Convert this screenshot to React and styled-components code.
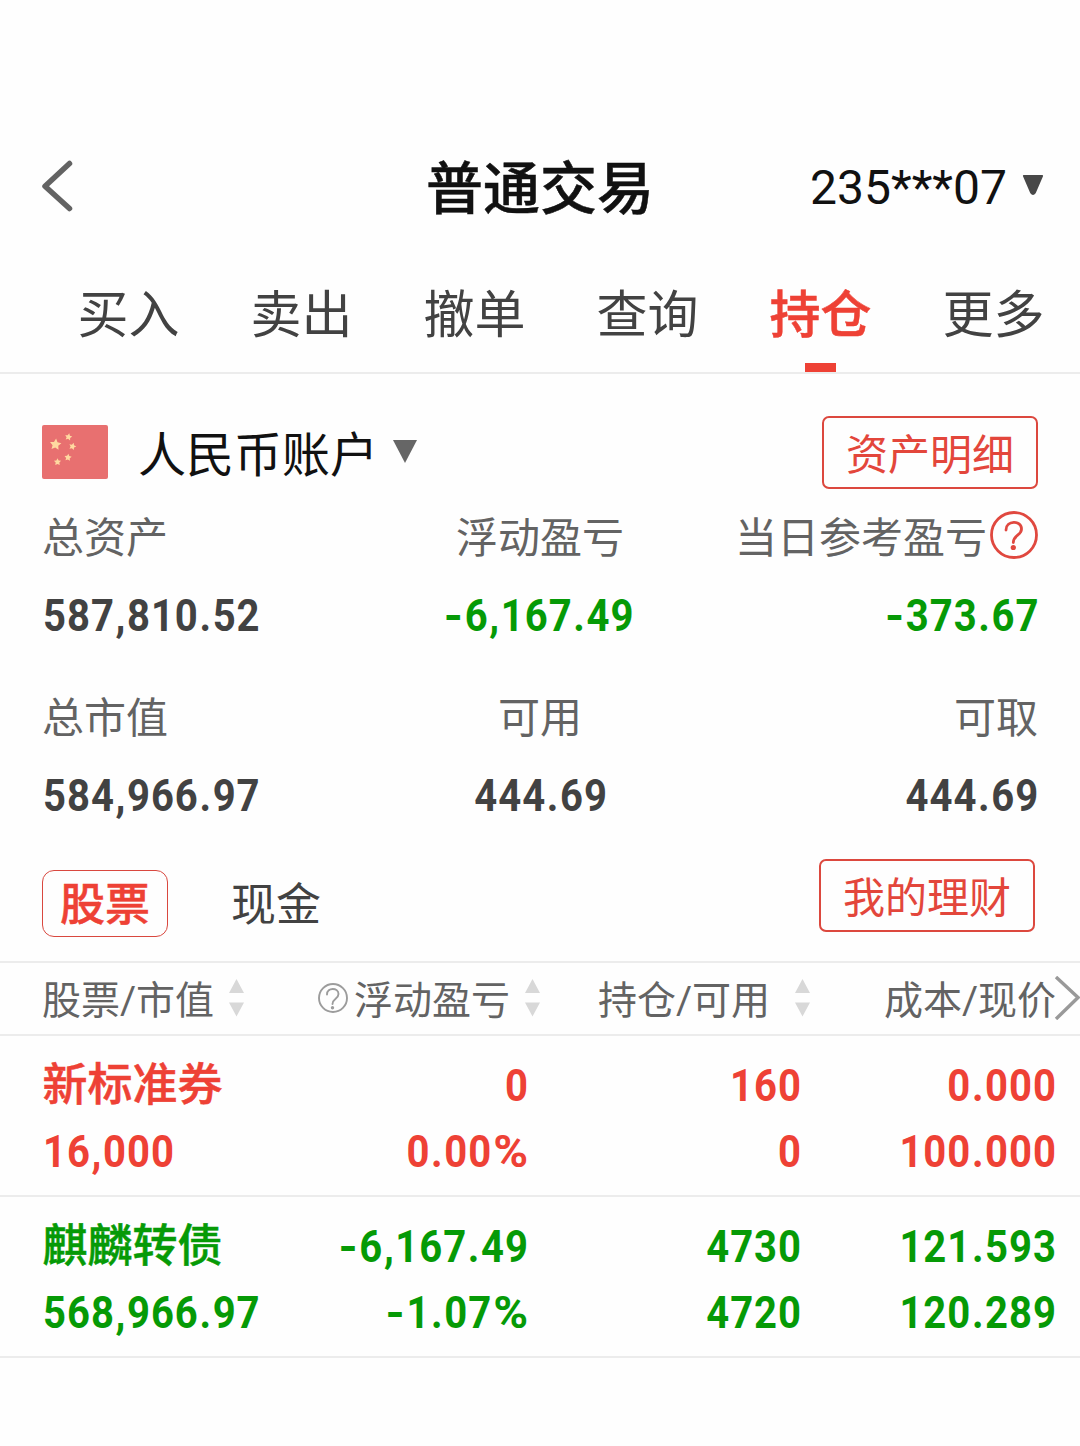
import React from 'react';
import styled, { createGlobalStyle } from 'styled-components';

const RED = '#ee4135';
const GREEN = '#069a06';
const DARK = '#424242';
const GRAY = '#636363';
const LINE = '#ececec';

const GlobalStyle = createGlobalStyle`
	* {
		box-sizing: border-box;
	}

	body {
		margin: 0;
		background: #fefefe;
		font-family: Roboto, 'Noto Sans CJK SC', sans-serif;
	}
`;

const Page = styled.div`
	width: 1080px;
	min-height: 1446px;
	padding-top: 114px;
	overflow: hidden;
	white-space: nowrap;
`;

const Header = styled.header`
	display: grid;
	grid-template-columns: 1fr 228px 1fr;
	align-items: center;
	height: 144px;
	padding: 0 36px 0 38px;
`;

const BackIcon = styled.svg`
	margin-left: 2px;
`;

const Title = styled.h1`
	margin: 0;
	padding-top: 7px;
	color: #111;
	font-size: 57px;
	font-weight: 500;
	line-height: 72px;
	text-indent: -1px;
	-webkit-text-stroke: 0.5px;
`;

const AccountNo = styled.div`
	display: flex;
	justify-content: flex-end;
	align-items: center;
	gap: 15px;
	color: #111;
	font-size: 48px;
	line-height: 72px;
	padding-top: 4px;

	svg {
		margin-bottom: 6px;
	}
`;

const Tabs = styled.nav`
	display: grid;
	grid-template-columns: repeat(6, 173px);
	height: 116px;
	padding-left: 42px;
	border-bottom: 2px solid ${LINE};
`;

const Tab = styled.div`
	display: flex;
	flex-direction: column;
	align-items: center;
	color: ${props => (props.$active ? RED : DARK)};
	font-size: 51px;
	font-weight: ${props => (props.$active ? 500 : 400)};
	line-height: 115px;
	-webkit-text-stroke: ${props => (props.$active ? 0.5 : 0)}px;

	&::after {
		content: '';
		width: 31px;
		height: 9px;
		margin-top: -10px;
		background: ${props => (props.$active ? RED : 'transparent')};
	}
`;

const Account = styled.section`
	display: flex;
	align-items: center;
	height: 73px;
	margin: 42px 42px 11px;
	color: #111;
	font-size: 48px;
	line-height: 73px;

	svg {
		margin-bottom: 2px;
	}
`;

const AccountName = styled.span`
	margin: 5px 15px 0 30px;
`;

const OutlineButton = styled.button`
	width: 216px;
	height: 73px;
	margin-left: auto;
	padding: 6px 0 0;
	border: 2px solid #dc483e;
	border-radius: 7px;
	background: transparent;
	color: #e3463b;
	font-family: inherit;
	font-size: 42px;
	line-height: 63px;
`;

const Stats = styled.section`
	display: grid;
	grid-template-columns: 1fr 300px 1fr;
	row-gap: 25px;
	padding: 0 42px;
`;

const Stat = styled.div`
	display: flex;
	flex-direction: column;
	align-items: ${props => props.$align || 'flex-start'};
`;

const StatLabel = styled.div`
	display: flex;
	align-items: center;
	height: 77px;
	color: ${GRAY};
	font-size: 42px;
	line-height: 77px;

	svg {
		margin: 0 0 7px 3px;
	}
`;

// narrowed digits with open tracking, squeezed towards the aligned edge
const FigureText = styled.div`
	color: ${props => props.$color || DARK};
	font-size: 45px;
	font-weight: 700;
	line-height: ${props => props.$height || 66}px;
	letter-spacing: 1.1px;
	margin: 0 -1px 0 1px;
	transform: scaleX(0.89);
	transform-origin: ${props => props.$origin || 'left'};
`;

const Point = styled.span`
	margin: 0 0.7px;
`;

const Sign = styled.span`
	display: inline-block;
	margin-right: 0.5px;
	transform: scaleX(1.22);
	transform-origin: right;
`;

const Percent = styled.span`
	display: inline-block;
	margin-left: 7px;
	transform: scaleX(1.18);
	transform-origin: right;
`;

const Switcher = styled.section`
	display: flex;
	align-items: flex-start;
	height: 126px;
	padding: 24px 45px 0 42px;
	color: ${DARK};
	font-size: 45px;
`;

const Segment = styled.div`
	width: 126px;
	height: 67px;
	margin-top: 11px;
	border: 1px solid ${props => (props.$active ? '#d9483f' : 'transparent')};
	border-radius: 12px;
	color: ${props => (props.$active ? RED : DARK)};
	font-weight: ${props => (props.$active ? 500 : 400)};
	line-height: 70px;
	text-align: center;
	-webkit-text-stroke: ${props => (props.$active ? 0.5 : 0)}px;

	& + & {
		margin-left: 45px;
	}
`;

const TableRow = styled.div`
	display: grid;
	grid-template-columns: 248px 238px 273px 255px;
	padding: 17px 0 10px 42px;
	border-bottom: 2px solid ${LINE};
	color: ${props => props.$color};
`;

const TableHead = styled.div`
	position: relative;
	display: grid;
	grid-template-columns: 248px 250px 270px 246px;
	align-items: center;
	height: 75px;
	padding-left: 42px;
	border: solid ${LINE};
	border-width: 2px 0;
	color: ${GRAY};
	font-size: 39px;
	line-height: 71px;

	svg {
		margin-bottom: 2px;
	}
`;

const HeadCell = styled.div`
	display: flex;
	align-items: center;
	justify-content: ${props => (props.$first ? 'flex-start' : 'flex-end')};
	height: 71px;
`;

const HeadText = styled.span`
	padding-top: 6px;
	margin-left: ${props => props.$indent || 0}px;
	margin-right: ${props => props.$space || 0}px;
`;

const ScrollHint = styled.div`
	position: absolute;
	top: 13px;
	right: 0;
	display: flex;
`;

const Cell = styled.div`
	text-align: ${props => (props.$first ? 'left' : 'right')};
`;

const Name = styled.div`
	padding: 0 0 0 0.5px;
	font-size: 45px;
	font-weight: 500;
	line-height: 66px;
	-webkit-text-stroke: 0.5px;
`;

const marks = { '-': Sign, '%': Percent, ',': Point, '.': Point };

const Figure = ({ color, height, origin, children }) => (
	<FigureText $color={color} $height={height} $origin={origin}>
		{children.split(/([-%,.])/).map((part, i) => {
			const Mark = marks[part];
			return Mark ? <Mark key={i}>{part}</Mark> : part;
		})}
	</FigureText>
);

const Triangle = ({ width, height, color, round }) => (
	<svg width={width} height={height} viewBox="0 0 24 23">
		<path
			d={round ? 'M2 1.5H22L14 20Q12 23 10 20Z' : 'M0 0H24L12 23Z'}
			fill={color}
			stroke={round ? color : 'none'}
			strokeWidth="2"
			strokeLinejoin="round"
		/>
	</svg>
);

const SortArrows = () => (
	<svg width="15" height="38" viewBox="0 0 15 38">
		<path d="M7.5 0L15 14H0ZM0 23.500H15L7.500 37.500Z" fill="#d8d8d8" />
	</svg>
);

const Help = () => (
	<svg width="48" height="48" viewBox="0 0 48 48" fill="none" stroke="#e0483f" strokeWidth="2.8">
		<circle cx="24" cy="24" r="22.500" />
		<path d="M16 19C16 9 31.500 9 31.500 18C31.500 24.500 23.300 24 23.300 31.500" strokeLinecap="round" />
		<circle cx="23.300" cy="36.500" r="2.600" fill="#e0483f" stroke="none" />
	</svg>
);

const HelpSmall = () => (
	<svg width="30" height="30" viewBox="0 0 30 30" fill="none" stroke="#9c9c9c" strokeWidth="1.9">
		<circle cx="15" cy="15" r="14" />
		<path d="M9 11.500C9 4 20.500 4.500 20.500 11C20.500 16 14.500 15.500 14.500 21" strokeLinecap="round" />
		<circle cx="14.500" cy="24.700" r="1.700" fill="#9c9c9c" stroke="none" />
	</svg>
);

const star = (cx, cy, r, turn) =>
	Array.from({ length: 10 }, (_, i) => {
		const a = (Math.PI * i) / 5 - Math.PI / 2 + turn;
		const d = i % 2 ? r * 0.5 : r;
		return `${cx + d * Math.cos(a)},${cy + d * Math.sin(a)}`;
	}).join(' ');

const Flag = () => (
	<svg width="66" height="54" viewBox="0 0 66 54">
		<rect width="66" height="54" rx="2" fill="#e87070" />
		<g fill="#ffd9a0">
			<polygon points={star(13.5, 19.5, 6, 0.1)} />
			<polygon points={star(26.5, 12, 3.800, 0.2)} />
			<polygon points={star(30.500, 21.500, 3.800, 0.3)} />
			<polygon points={star(26, 32.500, 3.800, 0.1)} />
			<polygon points={star(15.500, 37, 3.800, 0)} />
		</g>
	</svg>
);

const tabs = ['买入', '卖出', '撤单', '查询', '持仓', '更多'];

const stats = [
	{ label: '总资产', value: '587,810.52' },
	{ label: '浮动盈亏', value: '-6,167.49', align: 'center', origin: 'center', color: GREEN },
	{ label: '当日参考盈亏', value: '-373.67', align: 'flex-end', origin: 'right', color: GREEN, help: true },
	{ label: '总市值', value: '584,966.97' },
	{ label: '可用', value: '444.69', align: 'center', origin: 'center' },
	{ label: '可取', value: '444.69', align: 'flex-end', origin: 'right' },
];

const holdings = [
	{
		name: '新标准券',
		value: '16,000',
		color: RED,
		cells: [['0', '0.00%'], ['160', '0'], ['0.000', '100.000']],
	},
	{
		name: '麒麟转债',
		value: '568,966.97',
		color: GREEN,
		cells: [['-6,167.49', '-1.07%'], ['4730', '4720'], ['121.593', '120.289']],
	},
];

class App extends React.Component {
	render() {
		return (
			<Page>
				<GlobalStyle />
				<Header>
					<BackIcon width="34" height="54" viewBox="0 0 34 54" fill="none" stroke="#636363" strokeWidth="5.500" strokeLinecap="round" strokeLinejoin="round">
						<path d="M29.500 4.500L5 27.200L29.500 49.500" />
					</BackIcon>
					<Title>普通交易</Title>
					<AccountNo>
						<span>235***07</span>
						<Triangle width={22} height={22} color="#484848" round />
					</AccountNo>
				</Header>
				<Tabs>
					{tabs.map(tab => (
						<Tab key={tab} $active={tab === '持仓'}>{tab}</Tab>
					))}
				</Tabs>
				<Account>
					<Flag />
					<AccountName>人民币账户</AccountName>
					<Triangle width={24} height={23} color="#666" />
					<OutlineButton>资产明细</OutlineButton>
				</Account>
				<Stats>
					{stats.map(item => (
						<Stat key={item.label} $align={item.align}>
							<StatLabel>
								{item.label}
								{item.help && <Help />}
							</StatLabel>
							<Figure color={item.color} height={78} origin={item.origin}>{item.value}</Figure>
						</Stat>
					))}
				</Stats>
				<Switcher>
					<Segment $active>股票</Segment>
					<Segment>现金</Segment>
					<OutlineButton>我的理财</OutlineButton>
				</Switcher>
				<TableHead>
					<HeadCell $first>
						<HeadText $space={15}>股票/市值</HeadText>
						<SortArrows />
					</HeadCell>
					<HeadCell>
						<HelpSmall />
						<HeadText $indent={6} $space={15}>浮动盈亏</HeadText>
						<SortArrows />
					</HeadCell>
					<HeadCell>
						<HeadText $space={25}>持仓/可用</HeadText>
						<SortArrows />
					</HeadCell>
					<HeadCell>
						<HeadText>成本/现价</HeadText>
					</HeadCell>
					<ScrollHint>
						<svg width="26" height="44" viewBox="0 0 26 44" fill="none" stroke="#999" strokeWidth="3.400">
							<path d="M2 1L24 21.500L2 43" />
						</svg>
					</ScrollHint>
				</TableHead>
				{holdings.map(row => (
					<TableRow key={row.name} $color={row.color}>
						<Cell $first>
							<Name>{row.name}</Name>
							<Figure color={row.color}>{row.value}</Figure>
						</Cell>
						{row.cells.map((pair, i) => (
							<Cell key={i}>
								<Figure color={row.color} origin="right">{pair[0]}</Figure>
								<Figure color={row.color} origin="right">{pair[1]}</Figure>
							</Cell>
						))}
					</TableRow>
				))}
			</Page>
		);
	}
}

export default App;
